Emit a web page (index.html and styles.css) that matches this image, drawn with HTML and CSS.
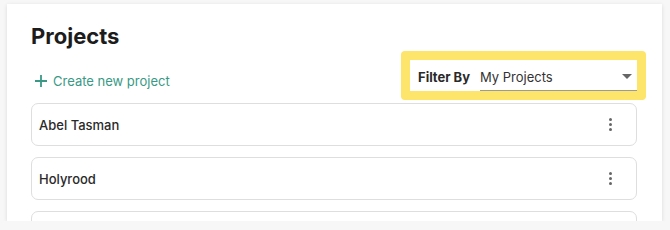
FILE: index.html
```html
<!DOCTYPE html>
<html lang="en">
<head>
    <meta charset="UTF-8">
    <title>Projects</title>
    <link rel="stylesheet" href="styles.css">
</head>
<body>
    <div class="card">
        <h1 class="card-title">Projects</h1>

        <div class="toolbar">
            <a class="create-link" href="#">
                <svg width="12" height="12" viewBox="0 0 12 12"><path d="M6 0v12M0 6h12" stroke="currentColor" stroke-width="1.8"/></svg>
                Create new project
            </a>
            <div class="filter-highlight">
                <div class="filter">
                    <span class="filter-label">Filter By</span>
                    <div class="filter-select">
                        <span>My Projects</span>
                        <span class="caret"></span>
                    </div>
                </div>
            </div>
        </div>

        <div class="project-list">
            <div class="project-row">
                <span>Abel Tasman</span>
                <span class="kebab"><i></i><i></i><i></i></span>
            </div>
            <div class="project-row">
                <span>Holyrood</span>
                <span class="kebab"><i></i><i></i><i></i></span>
            </div>
            <div class="project-row"></div>
        </div>
    </div>
</body>
</html>
```

FILE: styles.css
```css
* {
    box-sizing: border-box;
    font-family: Inter, 'Open Sans', sans-serif;
}

body {
    margin: 0;
    padding: 4px 8px 0 7px;
    background: #f7f7f7;
}

.card {
    width: 655px;
    height: 217px;
    overflow: hidden;
    background: white;
    box-shadow: 0 1px 4px rgba(0, 0, 0, 0.12);
    padding: 18px 25px 0 24px;
}

.card-title {
    margin: 0 0 1px;
    font-size: 22px;
    line-height: 28px;
    font-weight: 700;
    color: #1c1c1c;
}

.toolbar {
    display: flex;
    justify-content: space-between;
    align-items: center;
}

.create-link {
    display: flex;
    align-items: center;
    gap: 6px;
    margin: 10px 0 0 4px;
    color: #3a9985;
    text-decoration: none;
    font-size: 13px;
}

.filter-highlight {
    width: 245px;
    height: 49px;
    margin-right: -9px;
    padding: 9px;
    background: #fde46a;
    border-radius: 4px;
}

.filter {
    height: 31px;
    background: white;
    display: flex;
    align-items: center;
    padding: 3px 0 0 8px;
}

.filter-label {
    font-weight: 700;
    font-size: 13px;
    color: #2a2a2a;
    width: 62px;
}

.filter-select {
    flex: 1;
    height: 100%;
    display: flex;
    align-items: center;
    justify-content: space-between;
    border-bottom: 1px solid #9a9a9a;
    font-size: 13px;
    color: #333;
    padding-right: 5px;
}

.caret {
    width: 0;
    height: 0;
    border-left: 5px solid transparent;
    border-right: 5px solid transparent;
    border-top: 5px solid #666;
}

.project-list {
    margin-top: 3px;
    display: flex;
    flex-direction: column;
    gap: 11px;
}

.project-row {
    height: 43px;
    flex-shrink: 0;
    border: 1px solid #dedede;
    border-radius: 7px;
    display: flex;
    align-items: center;
    justify-content: space-between;
    padding: 0 24px 0 7px;
    font-size: 13px;
    font-weight: 500;
    color: #2a2a2a;
}

.kebab {
    display: flex;
    flex-direction: column;
    gap: 2px;
}

.kebab i {
    width: 3px;
    height: 3px;
    border-radius: 50%;
    background: #666;
}
```
